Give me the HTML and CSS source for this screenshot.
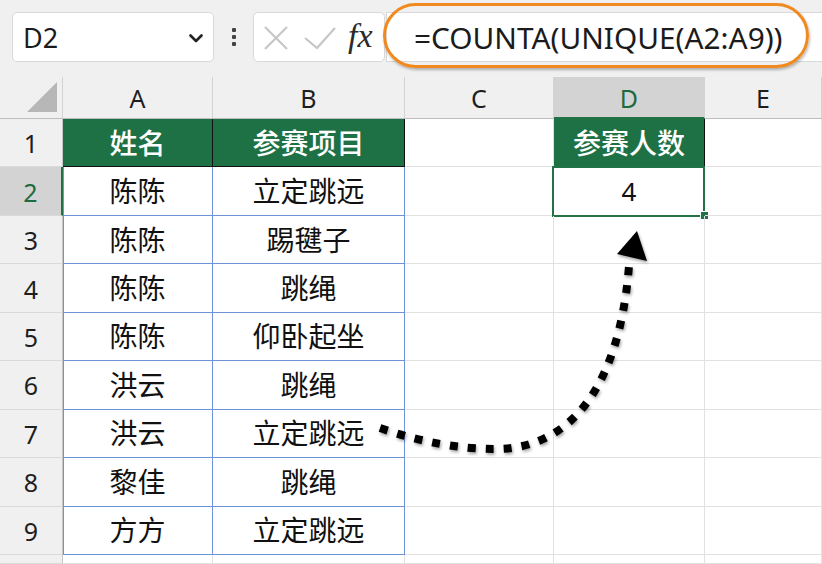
FILE: index.html
```html
<!DOCTYPE html>
<html lang="zh-CN">
<head>
<meta charset="utf-8">
<title>COUNTA UNIQUE</title>
<link rel="stylesheet" href="styles.css">
</head>
<body>
<div class="toolbar">
  <div class="namebox">
    <span class="ref">D2</span>
    <svg class="chev" width="14" height="9" viewBox="0 0 14 9"><polyline points="1.5,1.5 7,7 12.5,1.5" fill="none" stroke="#222" stroke-width="2.6" stroke-linecap="round" stroke-linejoin="round"/></svg>
  </div>
  <div class="sep"><i></i><i></i><i></i></div>
  <div class="fxbox">
    <svg class="ic-x" width="26" height="24" viewBox="0 0 26 24"><path d="M2 1 L24 23 M24 1 L2 23" stroke="#c6c6c6" stroke-width="2.2" fill="none"/></svg>
    <svg class="ic-ok" width="32" height="24" viewBox="0 0 32 24"><polyline points="1,12 13,22 31,2" stroke="#c6c6c6" stroke-width="2.2" fill="none"/></svg>
    <span class="fx">fx</span>
  </div>
  <div class="formula">=COUNTA(UNIQUE(A2:A9))</div>
</div>

<div class="sheet">
  <div class="c ch corner"><span class="tri"></span></div>
  <div class="c ch">A</div>
  <div class="c ch">B</div>
  <div class="c ch">C</div>
  <div class="c ch sel">D</div>
  <div class="c ch">E</div>

  <div class="c rh">1</div>
  <div class="c th">姓名</div>
  <div class="c th">参赛项目</div>
  <div class="c"></div>
  <div class="c th thd">参赛人数</div>
  <div class="c"></div>

  <div class="c rh sel">2</div>
  <div class="c td ta">陈陈</div>
  <div class="c td">立定跳远</div>
  <div class="c"></div>
  <div class="c active">4</div>
  <div class="c"></div>

  <div class="c rh">3</div>
  <div class="c td ta">陈陈</div>
  <div class="c td">踢毽子</div>
  <div class="c"></div>
  <div class="c"></div>
  <div class="c"></div>

  <div class="c rh">4</div>
  <div class="c td ta">陈陈</div>
  <div class="c td">跳绳</div>
  <div class="c"></div>
  <div class="c"></div>
  <div class="c"></div>

  <div class="c rh">5</div>
  <div class="c td ta">陈陈</div>
  <div class="c td">仰卧起坐</div>
  <div class="c"></div>
  <div class="c"></div>
  <div class="c"></div>

  <div class="c rh">6</div>
  <div class="c td ta">洪云</div>
  <div class="c td">跳绳</div>
  <div class="c"></div>
  <div class="c"></div>
  <div class="c"></div>

  <div class="c rh">7</div>
  <div class="c td ta">洪云</div>
  <div class="c td">立定跳远</div>
  <div class="c"></div>
  <div class="c"></div>
  <div class="c"></div>

  <div class="c rh">8</div>
  <div class="c td ta">黎佳</div>
  <div class="c td">跳绳</div>
  <div class="c"></div>
  <div class="c"></div>
  <div class="c"></div>

  <div class="c rh">9</div>
  <div class="c td ta">方方</div>
  <div class="c td">立定跳远</div>
  <div class="c"></div>
  <div class="c"></div>
  <div class="c"></div>

  <div class="c rh"></div>
  <div class="c"></div>
  <div class="c"></div>
  <div class="c"></div>
  <div class="c"></div>
  <div class="c"></div>
</div>

<div class="pill"></div>

<svg class="arrow" width="822" height="564" viewBox="0 0 822 564">
  <path d="M380,428 C420,442 460,449 495,449 C575,449 620,380 629,266" fill="none" stroke="#000" stroke-width="8" stroke-dasharray="8 10"/>
  <polygon points="637,231 617,254 647,261" fill="#000"/>
</svg>
</body>
</html>
```

FILE: styles.css
```css
html, body {
  margin: 0;
  padding: 0;
}
body {
  width: 822px;
  height: 564px;
  overflow: hidden;
  position: relative;
  background: #fff;
  font-family: "Noto Sans", "Noto Sans CJK SC", sans-serif;
  color: #111;
}

/* ---------- toolbar ---------- */
.toolbar {
  height: 77px;
  box-sizing: border-box;
  background: #f0f0f0;
  display: flex;
  align-items: flex-start;
  padding: 12px 0 0 12px;
}
.namebox {
  width: 202px;
  height: 50px;
  box-sizing: border-box;
  background: #fff;
  border: 1px solid #d9d9d9;
  border-radius: 5px;
  display: flex;
  align-items: center;
  justify-content: space-between;
  padding: 0 10px 0 10px;
}
.ref {
  font-size: 27px;
  color: #1b1b1b;
  line-height: 1;
}
.chev {
  display: block;
  margin-top: 2px;
}
.sep {
  width: 39px;
  height: 50px;
  display: flex;
  flex-direction: column;
  align-items: center;
  justify-content: center;
  gap: 3px;
}
.sep i {
  display: block;
  width: 4px;
  height: 4px;
  border-radius: 1px;
  background: #444;
}
.fxbox {
  width: 132px;
  height: 50px;
  box-sizing: border-box;
  background: #fff;
  border: 1px solid #d9d9d9;
  border-radius: 5px;
  display: flex;
  align-items: center;
  padding-left: 9px;
}
.ic-x { display: block; margin-top: 1px; }
.ic-ok { display: block; margin-left: 15px; margin-top: 1px; }
.fx {
  font-family: "Liberation Serif", "DejaVu Serif", serif;
  font-style: italic;
  font-size: 34px;
  color: #2a2a2a;
  margin-left: 12px;
  line-height: 1;
  margin-top: -3px;
}
.formula {
  flex: 1;
  height: 50px;
  box-sizing: border-box;
  margin-left: 1px;
  background: #fff;
  border: 1px solid #d9d9d9;
  border-right: none;
  display: flex;
  align-items: center;
  padding-left: 27px;
  font-size: 29.8px;
  color: #1b1b1b;
  white-space: nowrap;
}

/* annotation pill over the formula */
.pill {
  position: absolute;
  left: 383px;
  top: 3px;
  width: 426px;
  height: 65px;
  box-sizing: border-box;
  border: 3px solid #f08a1f;
  border-radius: 33px;
  box-shadow: 1px 2px 3px rgba(0, 0, 0, 0.28);
}

/* ---------- sheet ---------- */
.sheet {
  display: grid;
  grid-template-columns: 63px 150px 192px 149px 151px 1fr;
  grid-template-rows: 42px repeat(9, 48.45px) 1fr;
  height: 487px;
}
.c {
  box-sizing: border-box;
  border-right: 1px solid #e1e1e1;
  border-bottom: 1px solid #e1e1e1;
  display: flex;
  align-items: center;
  justify-content: center;
  font-size: 28px;
  line-height: 1;
  position: relative;
}
.ch {
  background: #f0f0f0;
  border-right: 1px solid #d3d3d3;
  border-bottom: 1px solid #bdbdbd;
  font-size: 25px;
  color: #1e1e1e;
  padding-top: 2px;
}
.ch.sel {
  background: #d3d3d3;
  color: #1e6b40;
  border-bottom: 2px solid #217346;
}
.corner {
  align-items: flex-end;
  justify-content: flex-end;
  padding: 0 5px 6px 0;
}
.tri {
  display: block;
  width: 30px;
  height: 30px;
  background: #b7b7b7;
  clip-path: polygon(100% 0, 100% 100%, 0 100%);
}
.rh {
  background: #f0f0f0;
  border-right: 1px solid #c6c6c6;
  border-bottom: 1px solid #d9d9d9;
  font-size: 25px;
  color: #1e1e1e;
  padding-top: 2px;
}
.rh.sel {
  background: #d3d3d3;
  color: #1e6b40;
  border-right: 2px solid #217346;
}
.th {
  background: #1e7145;
  color: #fff;
  font-weight: 500;
  border-right: 1px solid #111;
  border-bottom: 1px solid #111;
}
.td {
  border-right: 1px solid #6d93d9;
  border-bottom: 1px solid #6d93d9;
}
.ta {
  box-shadow: inset 1px 0 0 #6d93d9;
}
.active {
  font-size: 26px;
}
.active::before {
  content: "";
  position: absolute;
  left: -2px;
  top: -1px;
  right: -1px;
  bottom: -2px;
  border: 2px solid #217346;
}
.active::after {
  content: "";
  position: absolute;
  right: -5px;
  bottom: -5px;
  width: 7px;
  height: 7px;
  background: #217346;
  border: 1px solid #fff;
}

/* ---------- arrow annotation ---------- */
.arrow {
  position: absolute;
  left: 0;
  top: 0;
  pointer-events: none;
  filter: drop-shadow(1px 2px 1.5px rgba(0, 0, 0, 0.35));
}
```
